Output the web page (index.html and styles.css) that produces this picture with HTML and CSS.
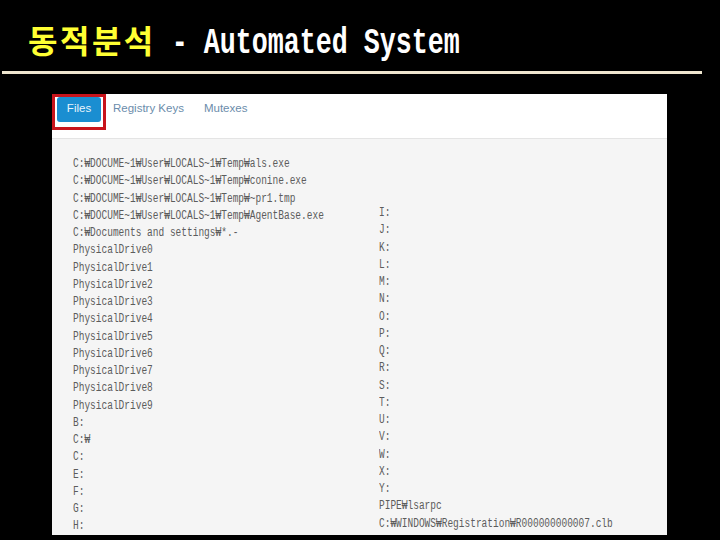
FILE: index.html
```html
<!DOCTYPE html>
<html lang="ko">
<head>
<meta charset="utf-8">
<title>동적분석 - Automated System</title>
<link rel="stylesheet" href="styles.css">
</head>
<body>
<header class="head">
  <h1 class="title"><span class="title-ko">동적분석</span><span class="title-en"> - Automated System</span></h1>
  <div class="rule"></div>
</header>
<main class="shot">
  <nav class="tabs">
    <a class="tab tab-active">Files</a>
    <a class="tab">Registry Keys</a>
    <a class="tab">Mutexes</a>
    <div class="highlight"></div>
  </nav>
  <section class="panel">
    <div class="col col-left">
      <div>C:₩DOCUME~1₩User₩LOCALS~1₩Temp₩als.exe</div>
      <div>C:₩DOCUME~1₩User₩LOCALS~1₩Temp₩conine.exe</div>
      <div>C:₩DOCUME~1₩User₩LOCALS~1₩Temp₩~pr1.tmp</div>
      <div>C:₩DOCUME~1₩User₩LOCALS~1₩Temp₩AgentBase.exe</div>
      <div>C:₩Documents and settings₩*.-</div>
      <div>PhysicalDrive0</div>
      <div>PhysicalDrive1</div>
      <div>PhysicalDrive2</div>
      <div>PhysicalDrive3</div>
      <div>PhysicalDrive4</div>
      <div>PhysicalDrive5</div>
      <div>PhysicalDrive6</div>
      <div>PhysicalDrive7</div>
      <div>PhysicalDrive8</div>
      <div>PhysicalDrive9</div>
      <div>B:</div>
      <div>C:₩</div>
      <div>C:</div>
      <div>E:</div>
      <div>F:</div>
      <div>G:</div>
      <div>H:</div>
    </div>
    <div class="col col-right">
      <div>I:</div>
      <div>J:</div>
      <div>K:</div>
      <div>L:</div>
      <div>M:</div>
      <div>N:</div>
      <div>O:</div>
      <div>P:</div>
      <div>Q:</div>
      <div>R:</div>
      <div>S:</div>
      <div>T:</div>
      <div>U:</div>
      <div>V:</div>
      <div>W:</div>
      <div>X:</div>
      <div>Y:</div>
      <div>PIPE₩lsarpc</div>
      <div>C:₩WINDOWS₩Registration₩R000000000007.clb</div>
    </div>
  </section>
</main>
</body>
</html>
```
FILE: styles.css
```css
html, body {
  margin: 0;
  padding: 0;
}
body {
  width: 720px;
  height: 540px;
  overflow: hidden;
  background: #000;
}
.head {
  padding: 0 18px 0 2px;
}
.title {
  margin: 0;
  padding: 21px 0 0 26px;
  height: 71px;
  box-sizing: border-box;
  font-weight: 400;
  line-height: 36px;
  white-space: pre;
  display: flex;
  align-items: baseline;
}
.title-ko {
  font-family: "Noto Sans CJK KR", sans-serif;
  font-weight: 700;
  font-size: 32px;
  letter-spacing: 2.5px;
  color: #ffff33;
}
.title-en {
  display: inline-block;
  font-family: "Liberation Mono", monospace;
  font-weight: 700;
  font-size: 26.67px;
  color: #fff;
  transform: scaleY(1.4);
  transform-origin: left 70%;
}
.rule {
  height: 3px;
  background: #efe6cf;
}
.shot {
  margin: 20px 53px 0 52px;
  width: 615px;
  height: 441px;
  background: #f5f5f5;
  display: flex;
  flex-direction: column;
}
.tabs {
  position: relative;
  height: 45px;
  box-sizing: border-box;
  background: #fff;
  border-bottom: 1px solid #e4e4e4;
  padding: 3px 0 0 5px;
  display: flex;
  align-items: flex-start;
  font-family: "Liberation Sans", sans-serif;
  font-size: 11.5px;
}
.tab {
  height: 25px;
  line-height: 23px;
  padding: 0 10px;
  color: #6b8cab;
}
.tab-active {
  width: 44px;
  padding: 0;
  margin-right: 2px;
  box-sizing: border-box;
  text-align: center;
  background: #1a8ed1;
  color: #e8f4fb;
  border-radius: 3px;
}
.highlight {
  position: absolute;
  left: 0;
  top: 0;
  width: 54px;
  height: 36px;
  box-sizing: border-box;
  border: 3px solid #c8141c;
}
.panel {
  flex: 1;
  overflow: hidden;
  font-family: "Liberation Mono", "Noto Sans CJK KR", monospace;
  font-size: 9.5px;
  line-height: 17.25px;
  color: #5c5c5c;
  display: grid;
  grid-template-columns: 306px 1fr;
  padding: 16px 0 0 21px;
  box-sizing: border-box;
}
.col-right {
  padding-top: 49px;
}
.col > div {
  height: 17.25px;
  white-space: pre;
  transform: scaleY(1.35);
}
```
